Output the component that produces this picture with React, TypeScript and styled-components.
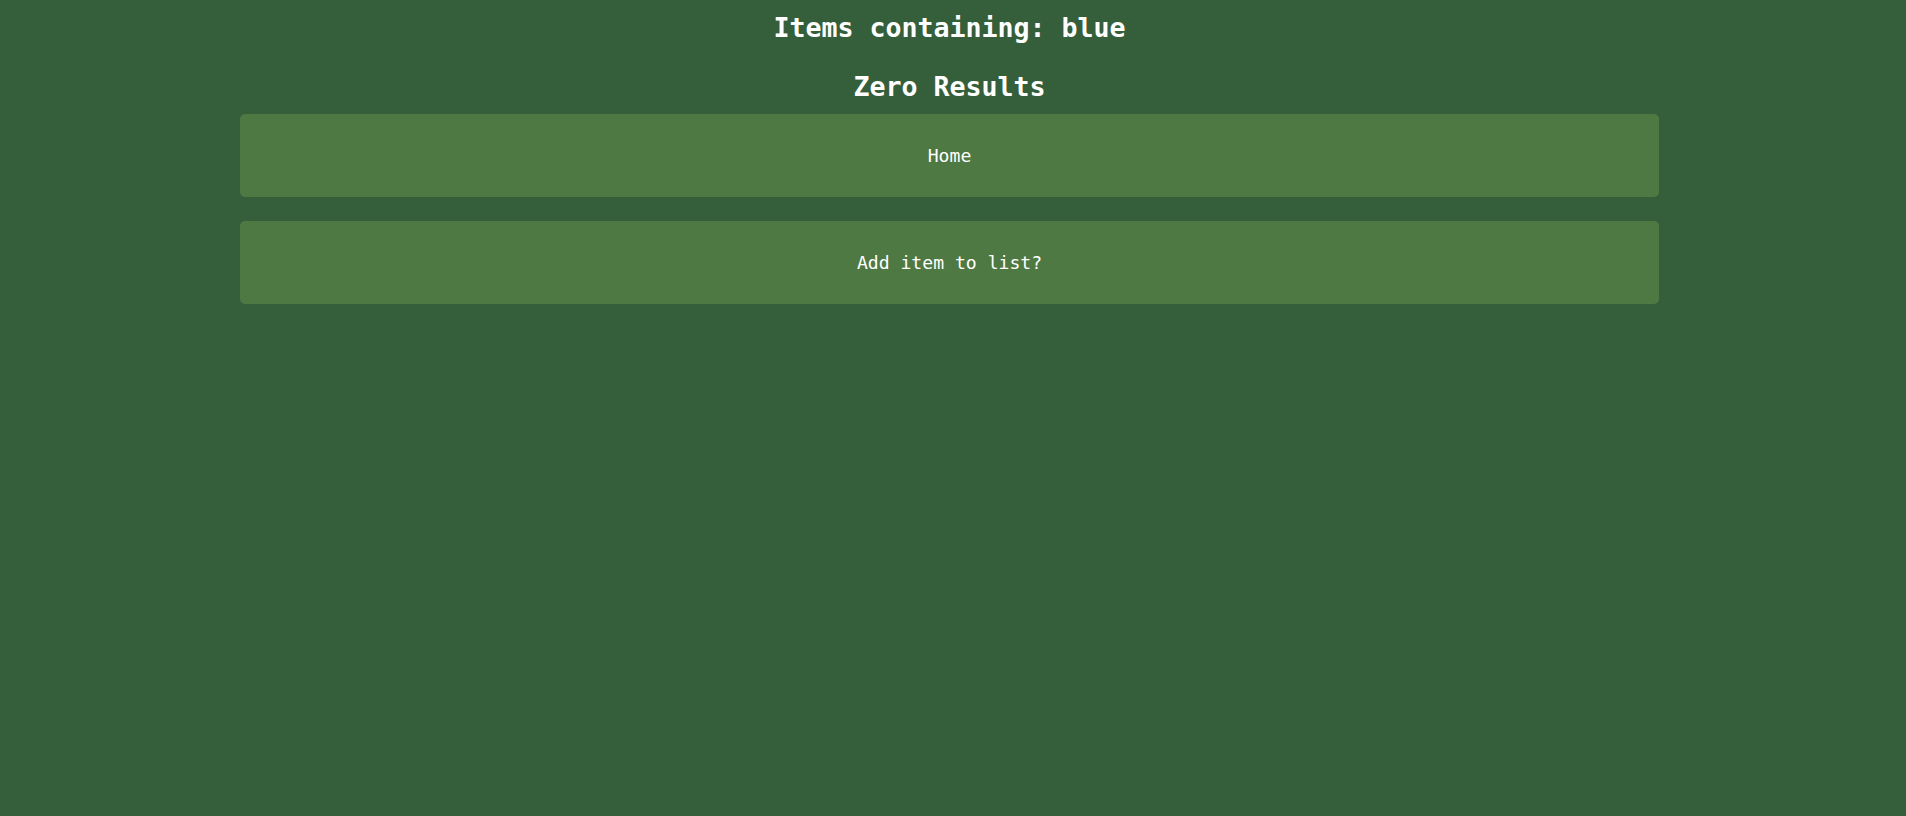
import React from "react";
import styled, { createGlobalStyle } from "styled-components";

const GlobalStyle = createGlobalStyle`
  html, body {
    margin: 0;
    padding: 0;
    background: #355e3b;
  }
  body {
    font-family: "DejaVu Sans Mono", "Liberation Mono", monospace;
    color: #ffffff;
  }
`;

const Page = styled.main`
  min-height: 816px;
  box-sizing: border-box;
  padding: 13px 247px 0 240px;
  display: flex;
  flex-direction: column;
  background: #355e3b;
`;

const Title = styled.h1`
  margin: 0;
  font-size: 26.6px;
  line-height: 30px;
  font-weight: bold;
  text-align: center;
`;

const Subtitle = styled.h2`
  margin: 29px 0 12px;
  font-size: 26.6px;
  line-height: 30px;
  font-weight: bold;
  text-align: center;
`;

const List = styled.div`
  display: flex;
  flex-direction: column;
  gap: 24px;
`;

const Card = styled.div`
  height: 83px;
  display: flex;
  align-items: center;
  justify-content: center;
  background: #4f7942;
  border-radius: 5px;
  font-size: 18.1px;
  cursor: pointer;
`;

export default function App() {
  return (
    <>
      <GlobalStyle />
      <Page>
        <Title>Items containing: blue</Title>
        <Subtitle>Zero Results</Subtitle>
        <List>
          <Card>Home</Card>
          <Card>Add item to list?</Card>
        </List>
      </Page>
    </>
  );
}
